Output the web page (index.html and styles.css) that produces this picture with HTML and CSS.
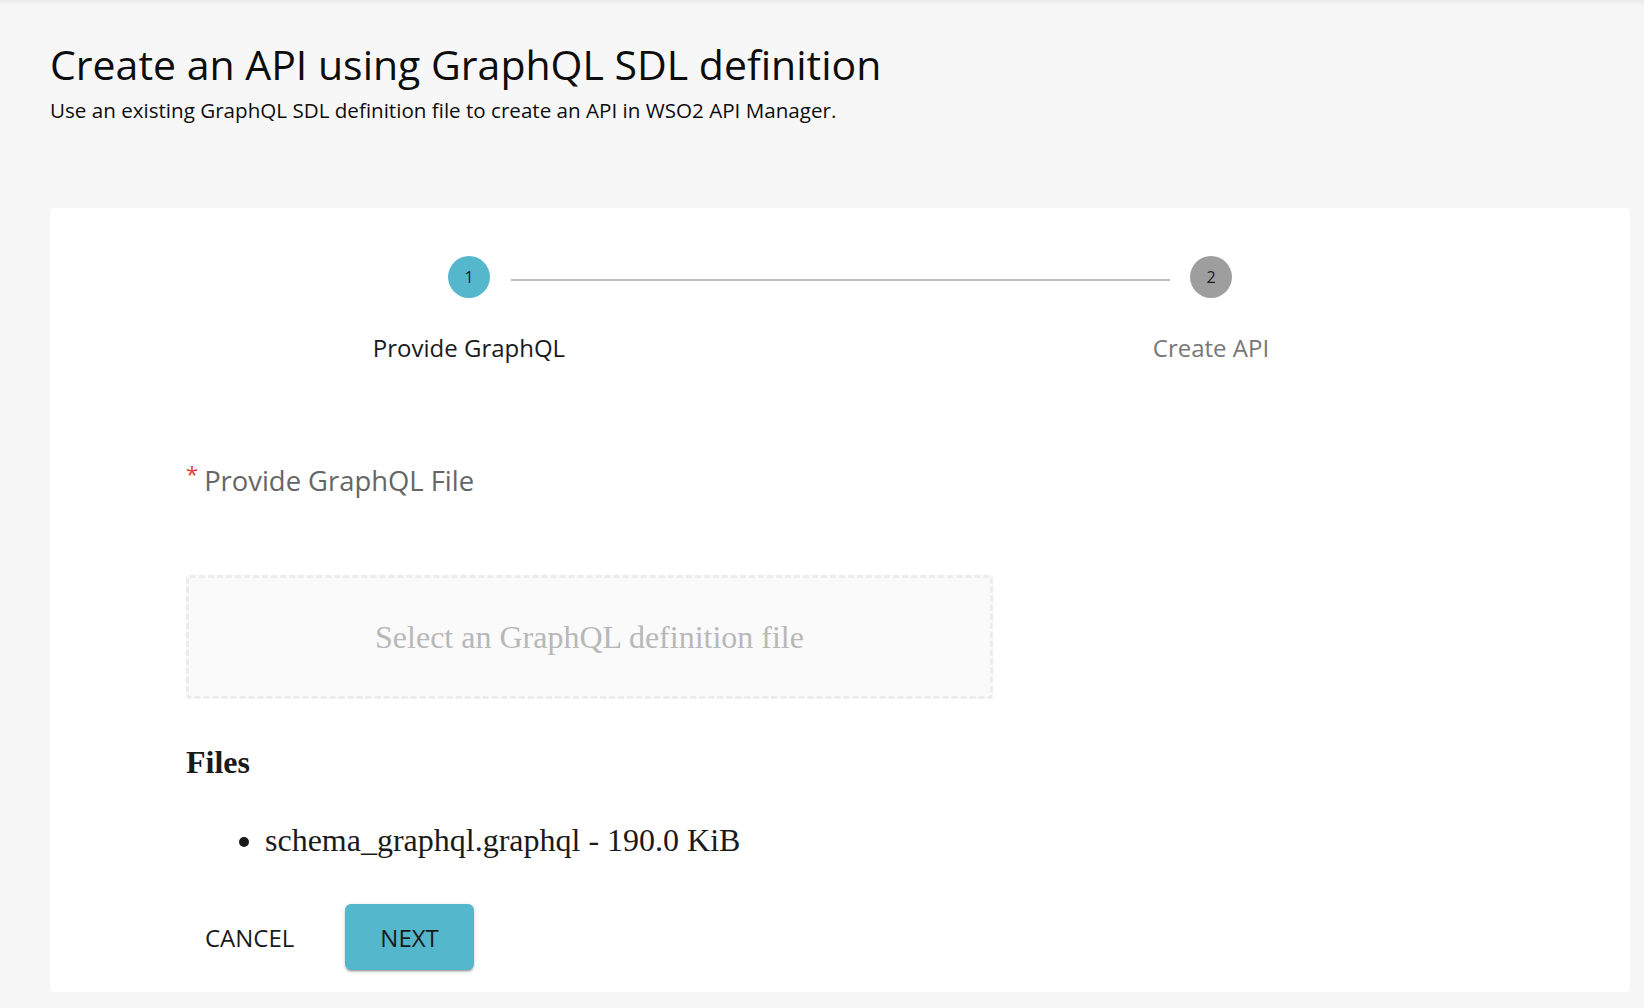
FILE: index.html
```html
<!DOCTYPE html>
<html lang="en">
<head>
<meta charset="utf-8">
<title>Create an API using GraphQL SDL definition</title>
<link rel="stylesheet" href="styles.css">
</head>
<body>
<div class="page">
  <header class="page-header">
    <h1 class="title">Create an API using GraphQL SDL definition</h1>
    <p class="subtitle">Use an existing GraphQL SDL definition file to create an API in WSO2 API Manager.</p>
  </header>

  <main class="card">
    <div class="stepper">
      <div class="step-icons">
        <span class="step-circle active">1</span>
        <span class="connector"></span>
        <span class="step-circle">2</span>
      </div>
      <div class="step-label active">Provide GraphQL</div>
      <div class="step-label">Create API</div>
    </div>

    <section class="form">
      <div class="field-label"><span class="req">*</span>Provide GraphQL File</div>

      <div class="dropzone">Select an GraphQL definition file</div>

      <h4 class="files-title">Files</h4>
      <ul class="files-list">
        <li>schema_graphql.graphql - 190.0 KiB</li>
      </ul>

      <div class="actions">
        <button class="btn btn-text" type="button">Cancel</button>
        <button class="btn btn-primary" type="button">Next</button>
      </div>
    </section>
  </main>
</div>
</body>
</html>
```

FILE: styles.css
```css
html, body {
  margin: 0;
  padding: 0;
}

body {
  background: #f7f7f7;
  font-family: "Open Sans", "Liberation Sans", sans-serif;
  color: rgba(0, 0, 0, 0.87);
}

.page {
  min-height: 1008px;
  box-sizing: border-box;
  box-shadow: inset 0 5px 5px -3px rgba(0, 0, 0, 0.07);
  padding-top: 40px;
}

.page-header {
  padding-left: 50px;
}

.title {
  margin: 0;
  font-size: 41px;
  font-weight: 400;
  line-height: 49px;
  color: #0d0d0d;
}

.subtitle {
  margin: 7px 0 0;
  font-size: 20.6px;
  line-height: 28px;
  color: #0d0d0d;
}

.card {
  margin: 84px 14px 0 50px;
  background: #fff;
  border-radius: 4px;
  padding: 48px 48px 22px;
}

/* Stepper */
.stepper {
  display: grid;
  grid-template-columns: 1fr 1fr;
}

.step-icons {
  grid-column: 1 / 3;
  display: flex;
  align-items: center;
  padding: 0 calc(25% - 21px);
}

.step-circle {
  width: 42px;
  height: 42px;
  border-radius: 50%;
  background: #9e9e9e;
  color: #1a1a1a;
  font-size: 16px;
  display: flex;
  align-items: center;
  justify-content: center;
  flex: none;
}

.step-circle.active {
  background: #55b7cc;
}

.connector {
  flex: 1;
  height: 1.5px;
  background: #bdbdbd;
  margin: 6px 20px 0 21px;
}

.step-label {
  margin-top: 33px;
  text-align: center;
  font-size: 24px;
  line-height: 34px;
  color: #777;
}

.step-label.active {
  color: #1a1a1a;
}

/* Form */
.form {
  margin-left: 88px;
  padding-top: 100px;
}

.field-label {
  font-size: 27.4px;
  line-height: 32px;
  color: #666;
  display: flex;
  align-items: flex-start;
}

.req {
  color: #e53935;
  font-size: 22px;
  line-height: 22px;
  margin-right: 6px;
  margin-top: -3px;
}

.dropzone {
  margin-top: 78px;
  width: 807px;
  height: 124px;
  box-sizing: border-box;
  border: 3px dashed #ececec;
  border-radius: 4px;
  background: #fafafa;
  display: flex;
  align-items: center;
  justify-content: center;
  font-family: "Liberation Serif", "Times New Roman", serif;
  font-size: 32px;
  color: #b8b8b8;
}

.files-title {
  margin: 45px 0 0;
  font-family: "Liberation Serif", "Times New Roman", serif;
  font-size: 32px;
  font-weight: 700;
  line-height: 37px;
  color: #1a1a1a;
}

.files-list {
  margin: 41px 0 0;
  padding-left: 79px;
  font-family: "Liberation Serif", "Times New Roman", serif;
  font-size: 32px;
  line-height: 37px;
  color: #1a1a1a;
}

.actions {
  margin-top: 45px;
  display: flex;
  gap: 16px;
  align-items: center;
}

.btn {
  font-family: "Open Sans", "Liberation Sans", sans-serif;
  font-size: 24px;
  text-transform: uppercase;
  border: 0;
  border-radius: 6px;
  height: 66px;
  padding: 0 35px;
  cursor: pointer;
  color: #1a1a1a;
}

.btn-text {
  background: transparent;
  padding: 0 19px;
  margin-right: 16px;
}

.btn-primary {
  background: #55b7cc;
  box-shadow: 0 3px 1px -2px rgba(0,0,0,0.2), 0 2px 2px 0 rgba(0,0,0,0.14), 0 1px 5px 0 rgba(0,0,0,0.12);
}
```
